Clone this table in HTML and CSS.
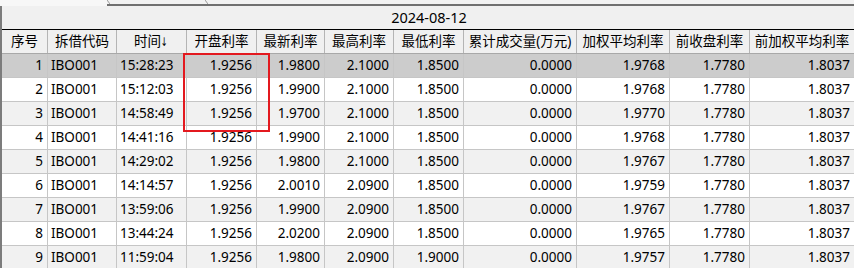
FILE: index.html
```html
<!DOCTYPE html>
<html>
<head>
<meta charset="utf-8">
<link rel="stylesheet" href="styles.css">
</head>
<body>
<div class="tabstrip">
  <div class="tab-active"></div>
  <svg class="tab-edge" width="3" height="6" viewBox="0 0 3 6"><rect x="0" y="0" width="3" height="4" fill="#f2f2f2"/><line x1="0" y1="0" x2="3" y2="4" stroke="#9a9a9a" stroke-width="1"/><rect x="0" y="4" width="3" height="2" fill="#707070"/></svg>
  <div class="tab"></div>
  <svg class="tab-edge" width="3" height="6" viewBox="0 0 3 6"><rect x="0" y="0" width="3" height="4" fill="#f2f2f2"/><line x1="0" y1="0" x2="3" y2="4" stroke="#9a9a9a" stroke-width="1"/><rect x="0" y="4" width="3" height="2" fill="#707070"/></svg>
  <div class="tab tab-fill"></div>
</div>
<div class="grid-wrap">
  <div class="date-row">2024-08-12</div>
  <div class="row head">
    <div>序号</div><div>拆借代码</div><div>时间<span class="arrow">↓</span></div><div>开盘利率</div><div>最新利率</div><div>最高利率</div><div>最低利率</div><div>累计成交量(万元)</div><div>加权平均利率</div><div>前收盘利率</div><div>前加权平均利率</div>
  </div>
  <div class="row sel">
    <div class="r">1</div><div class="l">IBO001</div><div class="l">15:28:23</div><div class="r">1.9256</div><div class="r">1.9800</div><div class="r">2.1000</div><div class="r">1.8500</div><div class="r">0.0000</div><div class="r">1.9768</div><div class="r">1.7780</div><div class="r">1.8037</div>
  </div>
  <div class="row">
    <div class="r">2</div><div class="l">IBO001</div><div class="l">15:12:03</div><div class="r">1.9256</div><div class="r">1.9900</div><div class="r">2.1000</div><div class="r">1.8500</div><div class="r">0.0000</div><div class="r">1.9768</div><div class="r">1.7780</div><div class="r">1.8037</div>
  </div>
  <div class="row alt">
    <div class="r">3</div><div class="l">IBO001</div><div class="l">14:58:49</div><div class="r">1.9256</div><div class="r">1.9700</div><div class="r">2.1000</div><div class="r">1.8500</div><div class="r">0.0000</div><div class="r">1.9770</div><div class="r">1.7780</div><div class="r">1.8037</div>
  </div>
  <div class="row">
    <div class="r">4</div><div class="l">IBO001</div><div class="l">14:41:16</div><div class="r">1.9256</div><div class="r">1.9900</div><div class="r">2.1000</div><div class="r">1.8500</div><div class="r">0.0000</div><div class="r">1.9768</div><div class="r">1.7780</div><div class="r">1.8037</div>
  </div>
  <div class="row alt">
    <div class="r">5</div><div class="l">IBO001</div><div class="l">14:29:02</div><div class="r">1.9256</div><div class="r">1.9800</div><div class="r">2.1000</div><div class="r">1.8500</div><div class="r">0.0000</div><div class="r">1.9767</div><div class="r">1.7780</div><div class="r">1.8037</div>
  </div>
  <div class="row">
    <div class="r">6</div><div class="l">IBO001</div><div class="l">14:14:57</div><div class="r">1.9256</div><div class="r">2.0010</div><div class="r">2.0900</div><div class="r">1.8500</div><div class="r">0.0000</div><div class="r">1.9759</div><div class="r">1.7780</div><div class="r">1.8037</div>
  </div>
  <div class="row alt">
    <div class="r">7</div><div class="l">IBO001</div><div class="l">13:59:06</div><div class="r">1.9256</div><div class="r">1.9900</div><div class="r">2.0900</div><div class="r">1.8500</div><div class="r">0.0000</div><div class="r">1.9767</div><div class="r">1.7780</div><div class="r">1.8037</div>
  </div>
  <div class="row">
    <div class="r">8</div><div class="l">IBO001</div><div class="l">13:44:24</div><div class="r">1.9256</div><div class="r">2.0200</div><div class="r">2.0900</div><div class="r">1.8500</div><div class="r">0.0000</div><div class="r">1.9765</div><div class="r">1.7780</div><div class="r">1.8037</div>
  </div>
  <div class="row alt">
    <div class="r">9</div><div class="l">IBO001</div><div class="l">11:59:04</div><div class="r">1.9256</div><div class="r">1.9800</div><div class="r">2.0900</div><div class="r">1.9000</div><div class="r">0.0000</div><div class="r">1.9757</div><div class="r">1.7780</div><div class="r">1.8037</div>
  </div>
  <div class="highlight"></div>
</div>
</body>
</html>
```
FILE: styles.css
```css
html, body {
  margin: 0;
  padding: 0;
  background: #ffffff;
  overflow: hidden;
}
body {
  width: 854px;
  height: 268px;
  font-family: "Noto Sans", "Noto Sans CJK SC", sans-serif;
  font-size: 13.5px;
  color: #000;
}
.tabstrip {
  display: flex;
  height: 6px;
}
.tab-active {
  width: 107px;
  height: 6px;
  background: #f7f7f7;
}
.tab-edge {
  display: block;
  flex: none;
}
.tab {
  width: 95px;
  height: 4px;
  background: #f2f2f2;
  border-bottom: 2px solid #707070;
}
.tab-fill {
  flex: 1;
  width: auto;
}
.grid-wrap {
  position: relative;
  border-left: 2px solid #7c7c7c;
}
.date-row {
  height: 23px;
  line-height: 23px;
  font-size: 14.5px;
  background: #f0f0f0;
  border-bottom: 1px solid #000;
  text-align: center;
  padding-left: 2px;
}
.row {
  display: grid;
  grid-template-columns: 46px 69px 70px 70px 68px 69px 70px 113px 93px 80px 1fr;
  height: 24px;
  box-sizing: border-box;
  border-bottom: 1px solid #c6c6c6;
  background: #ffffff;
}
.row > div {
  box-sizing: border-box;
  border-right: 1px solid #c6c6c6;
  line-height: 23px;
  white-space: nowrap;
  overflow: hidden;
}
.row > div:last-child {
  border-right: none;
}
.row.head {
  background: #f0f0f0;
  border-bottom-color: #a8a8a8;
}
.row.head > div {
  text-align: center;
  border-right-color: #b4b4b4;
}
.arrow {
  display: inline-block;
  font-family: "DejaVu Sans", sans-serif;
  font-size: 12px;
  transform: scaleX(0.7);
  margin-left: -2px;
}
.row.sel {
  background: #cccccc;
}
.row.alt {
  background: #f1f1f1;
}
.r {
  text-align: right;
  padding-right: 4px;
}
.l {
  text-align: left;
  padding-left: 3px;
}
.highlight {
  position: absolute;
  left: 181px;
  top: 47px;
  width: 87px;
  height: 79px;
  box-sizing: border-box;
  border: 2px solid #e3191f;
}
```
